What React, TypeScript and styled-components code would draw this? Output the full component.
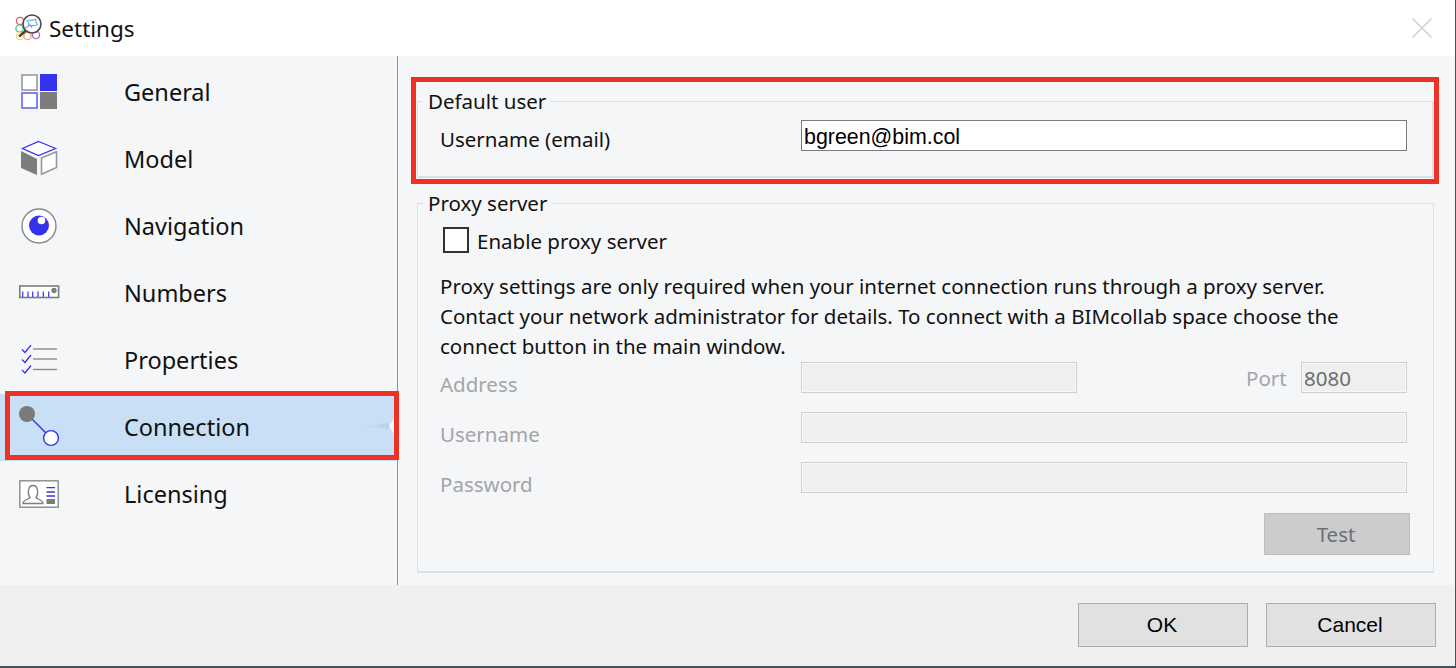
import styled, { createGlobalStyle } from "styled-components";

const UI_FONT = `"Noto Sans", "Open Sans", sans-serif`;
const ARIAL = `"Liberation Sans", Arial, sans-serif`;

const GlobalStyle = createGlobalStyle`
  html, body {
    margin: 0;
    padding: 0;
    background: #fff;
  }
  * {
    box-sizing: border-box;
  }
`;

const LogoIcon = () => (
  <svg width="28" height="28" viewBox="0 0 28 28" fill="none">
    <circle cx="5" cy="7" r="3.6" stroke="#e4575a" strokeWidth="1.3" />
    <circle cx="4.5" cy="14.500" r="3.6" stroke="#55bd9a" strokeWidth="1.3" />
    <circle cx="5" cy="22" r="3.6" stroke="#f3d67c" strokeWidth="1.3" />
    <circle cx="12.500" cy="22" r="3.6" stroke="#efa583" strokeWidth="1.3" />
    <circle cx="21" cy="21" r="3.6" stroke="#a86fc6" strokeWidth="1.3" />
    <circle cx="17" cy="10" r="9" fill="#fff" stroke="#4a4a4a" strokeWidth="1.6" />
    <path d="M11.500 6.500c3 1.500 3 3 1.500 5M13 6c3 1 6 0 8-1M21 5c-1 3 1 4 1.500 6M14 11c3 1 5 1 8 0" stroke="#4fb4dc" strokeWidth="1.1" />
    <path d="M10.500 14l4.500-3 2 3" stroke="#b58bd6" strokeWidth="1.300" />
    <path d="M11 16.500l-7 6" stroke="#444" strokeWidth="2.400" />
  </svg>
);

const GeneralIcon = () => (
  <svg width="38" height="38" viewBox="0 0 38 38">
    <rect x="2" y="2" width="15" height="15" fill="#fff" stroke="#999" strokeWidth="1.6" />
    <rect x="20" y="1" width="17" height="17" fill="#3333ee" />
    <rect x="2" y="20" width="15" height="15" fill="#fff" stroke="#6666f5" strokeWidth="1.6" />
    <rect x="20" y="19" width="17" height="17" fill="#7d7d7d" />
  </svg>
);

const ModelIcon = () => (
  <svg width="38" height="38" viewBox="0 0 38 38">
    <path d="M18.500 1.500L35.500 8.500l-17 7L2.500 8.500z" fill="#fff" stroke="#3333ee" strokeWidth="1.3" />
    <path d="M1 11l16 8v16L1 28z" fill="#7d7d7d" />
    <path d="M21.500 18l15-6.300V27.500l-15 6.700z" fill="#fff" stroke="#999" strokeWidth="1.6" />
  </svg>
);

const NavigationIcon = () => (
  <svg width="38" height="38" viewBox="0 0 38 38">
    <circle cx="19" cy="19" r="17" fill="#fff" stroke="#888" strokeWidth="1.4" />
    <circle cx="19" cy="18.500" r="10" fill="#3333ee" />
    <circle cx="21.500" cy="13.500" r="3.8" fill="#fff" />
  </svg>
);

const NumbersIcon = () => (
  <svg width="42" height="15" viewBox="0 0 42 15">
    <rect x="1.800" y="1" width="38.800" height="11.500" fill="#fff" stroke="#7d7d7d" strokeWidth="1.6" />
    <path d="M4.700 12V6.500M10 12V6.500M14.700 12V6.500M20 12V6.500M25.300 12V6.500M30.700 12V6.500" stroke="#3333ee" strokeWidth="1.2" />
    <circle cx="36" cy="5.500" r="2.700" fill="#7d7d7d" />
  </svg>
);

const PropertiesIcon = () => (
  <svg width="38" height="30" viewBox="0 0 38 30" fill="none">
    {[0, 10, 20.5].map((y) => (
      <g key={y}>
        <path d={`M2 ${y + 4.5}l3 3 6-7.500`} stroke="#3333ee" strokeWidth="1.3" />
        <path d={`M13 ${y + 4}h24`} stroke="#8a8a8a" strokeWidth="1.4" />
      </g>
    ))}
  </svg>
);

const ConnectionIcon = () => (
  <svg width="42" height="42" viewBox="0 0 42 42">
    <path d="M11 10l22 22" stroke="#3333ee" strokeWidth="1.4" />
    <circle cx="9" cy="8" r="8" fill="#7a7a7a" />
    <circle cx="33" cy="32" r="7.400" fill="#fff" stroke="#3333ee" strokeWidth="1.4" />
  </svg>
);

const LicensingIcon = () => (
  <svg width="40" height="28" viewBox="0 0 40 28" fill="none">
    <rect x="0.800" y="0.800" width="38.400" height="26.400" fill="#fff" stroke="#8a8a8a" strokeWidth="1.4" />
    <path
      d="M4 23.500c0-4 5-3.500 7-6-2.500-3-2.500-12 3-12s5.500 9 3 12c2 2.500 7 2 7 6z"
      stroke="#7d7d7d"
      strokeWidth="1.3"
      fill="#fff"
    />
    <path d="M27.500 7.700h8.500M27.500 12h8.500M27.500 16h8.500" stroke="#3333ee" strokeWidth="1.3" />
    <rect x="27.500" y="19" width="8.500" height="5" fill="#7d7d7d" />
  </svg>
);

const NAV_ITEMS = [
  { label: "General", icon: <GeneralIcon /> },
  { label: "Model", icon: <ModelIcon /> },
  { label: "Navigation", icon: <NavigationIcon /> },
  { label: "Numbers", icon: <NumbersIcon /> },
  { label: "Properties", icon: <PropertiesIcon /> },
  { label: "Connection", icon: <ConnectionIcon />, active: true },
  { label: "Licensing", icon: <LicensingIcon /> },
];

const App = () => {
  return (
    <>
      <GlobalStyle />
      <S.Window>
        <S.TitleBar>
          <S.TitleLeft>
            <LogoIcon />
            <S.Title>Settings</S.Title>
          </S.TitleLeft>
          <S.CloseButton aria-label="Close">
            <svg width="22" height="22" viewBox="0 0 22 22">
              <path d="M1.500 1.500l19 19M20.500 1.500l-19 19" stroke="#d2d2d2" strokeWidth="1.600" />
            </svg>
          </S.CloseButton>
        </S.TitleBar>

        <S.Body>
          <S.Sidebar>
            {NAV_ITEMS.map((item) => (
              <S.NavItem key={item.label} $active={item.active}>
                <S.NavIcon>{item.icon}</S.NavIcon>
                {item.label}
                {item.active && (
                  <>
                    <S.NotchGlow />
                    <S.Notch />
                    <S.RedFrame />
                  </>
                )}
              </S.NavItem>
            ))}
          </S.Sidebar>

          <S.Content>
            <S.UserGroup>
              <S.Legend>Default user</S.Legend>
              <S.Row>
                <S.Label $offset={7}>Username (email)</S.Label>
                <S.TextInput defaultValue="bgreen@bim.col" />
              </S.Row>
              <S.UserHighlight />
            </S.UserGroup>

            <S.ProxyGroup>
              <S.Legend>Proxy server</S.Legend>
              <S.CheckRow>
                <S.CheckBox />
                Enable proxy server
              </S.CheckRow>
              <S.Help>
                Proxy settings are only required when your internet connection runs through a proxy server.
                <br />
                Contact your network administrator for details. To connect with a BIMcollab space choose the
                <br />
                connect button in the main window.
              </S.Help>
              <S.Fields>
                <S.FieldRow>
                  <S.Label $disabled $offset={13}>Address</S.Label>
                  <S.DisabledInput $width={276} />
                  <S.PortLabel>Port</S.PortLabel>
                  <S.DisabledInput $width={106} defaultValue="8080" />
                </S.FieldRow>
                <S.FieldRow>
                  <S.Label $disabled $offset={13}>Username</S.Label>
                  <S.DisabledInput $width={606} />
                </S.FieldRow>
                <S.FieldRow>
                  <S.Label $disabled $offset={13}>Password</S.Label>
                  <S.DisabledInput $width={606} />
                </S.FieldRow>
              </S.Fields>
              <S.TestRow>
                <S.TestButton disabled>Test</S.TestButton>
              </S.TestRow>
            </S.ProxyGroup>
          </S.Content>
        </S.Body>

        <S.Footer>
          <S.DialogButton>OK</S.DialogButton>
          <S.DialogButton>Cancel</S.DialogButton>
        </S.Footer>
      </S.Window>
    </>
  );
};

export default App;

const S = {
  Window: styled.div`
    width: 1456px;
    height: 668px;
    display: flex;
    flex-direction: column;
    overflow: hidden;
    background: #f5f6f8;
    border-right: 1px solid #4a4f58;
    border-bottom: 2px solid #4a4f58;
    font-family: ${UI_FONT};
    color: #111;
  `,
  TitleBar: styled.div`
    height: 56px;
    flex: none;
    display: flex;
    align-items: center;
    justify-content: space-between;
    padding: 0 22px 0 15px;
    background: #fff;
  `,
  TitleLeft: styled.div`
    display: flex;
    align-items: center;
    gap: 6px;
  `,
  Title: styled.span`
    font-size: 22.5px;
  `,
  CloseButton: styled.button`
    display: flex;
    padding: 0;
    border: none;
    background: none;
  `,
  Body: styled.div`
    flex: 1;
    display: flex;
    min-height: 0;
  `,
  Sidebar: styled.nav`
    width: 398px;
    flex: none;
    padding-top: 3px;
    border-right: 1px solid #8c939c;
  `,
  NavItem: styled.div<{ $active?: boolean }>`
    position: relative;
    height: 67px;
    display: flex;
    align-items: center;
    padding: 0 0 2px 124px;
    font-size: 23.5px;
    background: ${(p) => (p.$active ? "#c8dff6" : "transparent")};
  `,
  NavIcon: styled.span`
    position: absolute;
    left: 18px;
    top: 0;
    bottom: 2px;
    width: 42px;
    display: flex;
    align-items: center;
    justify-content: center;
  `,
  RedFrame: styled.span`
    position: absolute;
    left: 5px;
    right: -2px;
    top: -3px;
    bottom: 1px;
    border: 5px solid #ee3124;
  `,
  Notch: styled.span`
    position: absolute;
    right: 3px;
    top: 24px;
    width: 5px;
    height: 16px;
    background: #f5f6f8;
    clip-path: polygon(100% 0, 100% 100%, 0 50%);
  `,
  NotchGlow: styled.span`
    position: absolute;
    right: 8px;
    top: 29px;
    width: 26px;
    height: 6px;
    background: linear-gradient(to right, rgba(170, 198, 226, 0), rgba(170, 198, 226, 0.55));
    clip-path: polygon(0 50%, 100% 0, 100% 100%);
  `,
  Content: styled.main`
    flex: 1;
    padding: 31px 21px 0 19px;
  `,
  UserGroup: styled.fieldset`
    position: relative;
    height: 91px;
    margin: 0 0 11px;
    padding: 0 25px 0 22px;
    border: 1px solid #dcdfe3;
    border-width: 1px 2px 2px 1px;
    min-width: 0;
  `,
  ProxyGroup: styled.fieldset`
    position: relative;
    height: 384px;
    margin: 0;
    padding: 0 26px 0 22px;
    border: 1px solid #dcdfe3;
    border-width: 1px 1px 2px 1px;
    min-width: 0;
  `,
  Legend: styled.legend`
    margin-left: -17px;
    padding: 0 5px;
    font-size: 20.5px;
    line-height: 28px;
  `,
  Row: styled.div`
    display: flex;
    align-items: center;
    justify-content: space-between;
    height: 31px;
    margin-top: 5px;
  `,
  Label: styled.span<{ $disabled?: boolean; $offset?: number }>`
    width: 361px;
    flex: none;
    padding-top: ${(p) => p.$offset ?? 0}px;
    font-size: 20.5px;
    color: ${(p) => (p.$disabled ? "#a3a5a8" : "#111")};
  `,
  TextInput: styled.input`
    width: 606px;
    height: 31px;
    padding: 3px 2px 0;
    border: 1px solid #7a7a7a;
    background: #fff;
    color: #000;
    font-family: ${ARIAL};
    font-size: 21.4px;
    outline: none;
  `,
  UserHighlight: styled.span`
    position: absolute;
    left: -7px;
    right: -7px;
    top: -38px;
    bottom: -8px;
    border: 5px solid #ee3124;
    pointer-events: none;
  `,
  CheckRow: styled.label`
    display: flex;
    align-items: center;
    gap: 8px;
    margin: 10px 0 0 3px;
    height: 27px;
    font-size: 20.5px;
  `,
  CheckBox: styled.span`
    width: 26px;
    height: 26px;
    margin-top: -2px;
    background: #fff;
    border: 2px solid #333;
  `,
  Help: styled.p`
    margin: 17px 0 0;
    font-size: 20.5px;
    line-height: 30px;
    white-space: nowrap;
  `,
  Fields: styled.div`
    display: flex;
    flex-direction: column;
    gap: 19px;
    margin-top: 1px;
  `,
  FieldRow: styled.div`
    display: flex;
    align-items: center;
    height: 31px;
  `,
  PortLabel: styled.span`
    margin-left: auto;
    width: 55px;
    font-size: 20.5px;
    color: #a3a5a8;
  `,
  DisabledInput: styled.input.attrs({ disabled: true })<{ $width: number }>`
    width: ${(p) => p.$width}px;
    height: 31px;
    padding: 0 2px;
    border: 1px solid #cfcfcf;
    box-shadow: inset 0 0 0 1px #f8f8f8;
    background: #efefef;
    color: #6d6d6d;
    font-family: ${UI_FONT};
    font-size: 20.5px;
  `,
  TestRow: styled.div`
    display: flex;
    justify-content: flex-end;
    margin: 20px -3px 0 0;
  `,
  TestButton: styled.button`
    width: 146px;
    height: 42px;
    padding: 0 2px 0 0;
    border: 1px solid #bdbdbd;
    background: #cccccc;
    color: #69707a;
    font-family: ${UI_FONT};
    font-size: 20.5px;
  `,
  Footer: styled.div`
    height: 81px;
    flex: none;
    display: flex;
    justify-content: flex-end;
    gap: 18px;
    padding: 18px 19px 0 0;
    background: #f0f0f0;
  `,
  DialogButton: styled.button`
    width: 170px;
    height: 44px;
    padding: 0 2px 0 0;
    border: 1px solid #adadad;
    background: #e1e1e1;
    color: #000;
    font-family: ${ARIAL};
    font-size: 21px;
  `,
};
